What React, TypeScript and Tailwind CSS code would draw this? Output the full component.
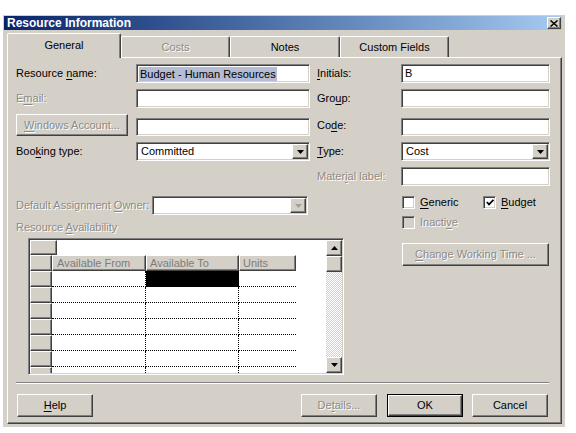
import * as React from "react";

const raised =
  "border border-t-white border-l-white border-r-[#404040] border-b-[#404040] shadow-[inset_-1px_-1px_0_#808080]";
const sunken =
  "border border-t-[#808080] border-l-[#808080] border-r-white border-b-white shadow-[inset_1px_1px_0_#404040,inset_-1px_-1px_0_#d4d0c8]";
const dim = "text-[#8c8a85] [text-shadow:1px_1px_0_#ffffff]";

function K({ children }: { children: React.ReactNode }) {
  return <span className="underline underline-offset-[2px]">{children}</span>;
}

function Field({ className = "", children }: { className?: string; children?: React.ReactNode }) {
  return (
    <div className={`${sunken} bg-white flex items-center pl-[3px] ${className}`}>{children}</div>
  );
}

function Arrow({ down = true, color = "#000" }: { down?: boolean; color?: string }) {
  return (
    <svg width="7" height="4" viewBox="0 0 7 4">
      <path d={down ? "M0 0h7L3.5 4z" : "M0 4h7L3.5 0z"} fill={color} />
    </svg>
  );
}

function Combo({
  value,
  disabled,
  className = "",
}: {
  value?: string;
  disabled?: boolean;
  className?: string;
}) {
  return (
    <div className={`${sunken} bg-white flex items-center p-px ${className}`}>
      <span className="flex-1 pl-[3px] truncate">{value}</span>
      <span
        className={`${raised} bg-[#d4d0c8] w-[16px] h-full flex items-center justify-center`}
      >
        <Arrow color={disabled ? "#a0a0a0" : "#000"} />
      </span>
    </div>
  );
}

function Check({ checked, disabled }: { checked?: boolean; disabled?: boolean }) {
  return (
    <span
      className={`${sunken} w-[13px] h-[13px] shrink-0 flex items-center justify-center ${
        disabled ? "bg-[#d4d0c8]" : "bg-white"
      }`}
    >
      {checked && (
        <svg width="8" height="7" viewBox="0 0 8 7">
          <path d="M0.8 3l2.2 2.4L7.4 0.8" stroke="#000" strokeWidth="1.7" fill="none" />
        </svg>
      )}
    </span>
  );
}

function Btn({
  children,
  disabled,
  className = "",
}: {
  children: React.ReactNode;
  disabled?: boolean;
  className?: string;
}) {
  return (
    <div
      className={`${raised} bg-[#d4d0c8] flex items-center justify-center ${
        disabled ? dim : "text-black"
      } ${className}`}
    >
      {children}
    </div>
  );
}

function Tab({
  children,
  w,
  active,
  disabled,
}: {
  children: React.ReactNode;
  w: string;
  active?: boolean;
  disabled?: boolean;
}) {
  return (
    <div
      className={`${w} ${
        active ? "h-[25px] -mb-px relative z-10" : "h-[21px]"
      } bg-[#d4d0c8] border-t border-l border-t-white border-l-white border-r border-r-[#404040] rounded-t-[2px] shadow-[inset_-1px_0_0_#808080] flex items-center justify-center ${
        disabled ? dim : "text-black"
      }`}
    >
      <span className={active ? "-mt-[2px]" : ""}>{children}</span>
    </div>
  );
}

const rows = [0, 1, 2, 3, 4, 5, 6];

function Grid() {
  return (
    <div className={`${sunken} w-[316px] h-[137px] ml-[12px] mt-[4px] bg-white flex p-px`}>
      <div className="flex-1 flex flex-col overflow-hidden">
        <div className="flex h-[15px] shrink-0">
          <div className={`${raised} bg-[#d4d0c8] w-[27px]`} />
          <div className="flex-1 bg-white" />
        </div>
        <div className="flex h-[16px] shrink-0 text-[#7c7c7c]">
          <div className={`${raised} bg-[#d4d0c8] w-[22px]`} />
          <div className={`${raised} bg-[#d4d0c8] w-[94px] pl-[4px] leading-[14px]`}>
            Available From
          </div>
          <div className={`${raised} bg-[#d4d0c8] w-[93px] pl-[3px] leading-[14px]`}>
            Available To
          </div>
          <div className={`${raised} bg-[#d4d0c8] w-[57px] pl-[3px] leading-[14px]`}>Units</div>
        </div>
        {rows.map((r) => (
          <div key={r} className="flex h-[16px] shrink-0">
            <div className={`${raised} bg-[#d4d0c8] w-[22px]`} />
            <div className="w-[94px] border-b border-r border-dotted border-black" />
            <div
              className={`w-[93px] border-b border-r border-dotted border-black ${
                r === 0 ? "bg-black" : ""
              }`}
            />
            <div className="w-[57px] border-b border-dotted border-black" />
          </div>
        ))}
      </div>
      <div className="w-[16px] flex flex-col">
        <div className={`${raised} bg-[#d4d0c8] h-[16px] flex items-center justify-center`}>
          <Arrow down={false} />
        </div>
        <div className={`${raised} bg-[#d4d0c8] h-[16px]`} />
        <div className="flex-1 bg-[repeating-conic-gradient(#d4d0c8_0_25%,#ffffff_0_50%)] bg-[length:2px_2px]" />
        <div className={`${raised} bg-[#d4d0c8] h-[16px] flex items-center justify-center`}>
          <Arrow />
        </div>
      </div>
    </div>
  );
}

export default function App() {
  return (
    <div className="w-[576px] h-[433px] bg-white overflow-hidden pt-[15px] pl-[3px] font-['Liberation_Sans',Arial,sans-serif] text-[11px] leading-[13px] text-black">
      <div className="w-[562px] h-[412px] bg-[#d4d0c8] flex flex-col">
        {/* title bar */}
        <div className="ml-px mt-px w-[558px] h-[14px] bg-linear-to-r from-[#0a246a] to-[#a6caf0] flex items-center justify-between">
          <span className="pl-[3px] text-white font-bold text-[12px] leading-[14px]">
            Resource Information
          </span>
          <span
            className={`${raised} bg-[#d4d0c8] w-[14px] h-[12px] mr-px flex items-center justify-center`}
          >
            <svg width="8" height="7" viewBox="0 0 8 7">
              <path d="M0.5 0.5l7 6M7.5 0.5l-7 6" stroke="#000" strokeWidth="1.5" />
            </svg>
          </span>
        </div>

        {/* tabs */}
        <div className="flex items-end h-[24px] mt-[3px] ml-[4px]">
          <Tab w="w-[114px]" active>
            General
          </Tab>
          <Tab w="w-[109px]" disabled>
            Costs
          </Tab>
          <Tab w="w-[110px]">Notes</Tab>
          <Tab w="w-[109px]">Custom Fields</Tab>
        </div>

        {/* panel */}
        <div className="ml-[4px] w-[555px] h-[367px] border border-t-white border-l-white border-r-[#404040] border-b-[#404040] shadow-[inset_-1px_-1px_0_#808080] pt-[6px] pl-[8px] flex flex-col">
          <div className="grid grid-cols-[120px_174px_7px_84px_149px] grid-rows-[19px_19px_22px_19px_19px] gap-y-[6px] items-center">
            <span>
              Resource <K>n</K>ame:
            </span>
            <Field className="h-[19px]">
              <span className="bg-[#b5bcd3] leading-[14px] px-px -ml-px">
                Budget - Human Resources
              </span>
            </Field>
            <span />
            <span>
              <K>I</K>nitials:
            </span>
            <Field className="h-[19px]">B</Field>

            <span className={dim}>
              E<K>m</K>ail:
            </span>
            <Field className="h-[19px]" />
            <span />
            <span>
              Gro<K>u</K>p:
            </span>
            <Field className="h-[19px]" />

            <Btn disabled className="w-[112px] h-[22px]">
              <span>
                <K>W</K>indows Account...
              </span>
            </Btn>
            <Field className="h-[18px] self-end" />
            <span />
            <span>
              Co<K>d</K>e:
            </span>
            <Field className="h-[18px] self-end" />

            <span>
              Boo<K>k</K>ing type:
            </span>
            <Combo value="Committed" className="h-[19px]" />
            <span />
            <span>
              <K>T</K>ype:
            </span>
            <Combo value="Cost" className="h-[19px]" />

            <span className="col-start-4">
              <span className={dim}>
                Mater<K>i</K>al label:
              </span>
            </span>
            <Field className="h-[19px]" />
          </div>

          <div className="flex mt-[10px]">
            <div className="w-[328px] flex flex-col">
              <div className="flex items-center h-[19px]">
                <span className={`${dim} w-[136px]`}>
                  Default Assignment <K>O</K>wner:
                </span>
                <Combo disabled className="w-[156px] h-[19px]" />
              </div>
              <span className={`${dim} mt-[6px]`}>
                Resource <K>A</K>vailability
              </span>
              <Grid />
            </div>
            <div className="ml-[58px] w-[148px] flex flex-col">
              <div className="flex items-center h-[13px]">
                <Check />
                <span className="ml-[5px] w-[63px]">
                  <K>G</K>eneric
                </span>
                <Check checked />
                <span className="ml-[5px]">
                  <K>B</K>udget
                </span>
              </div>
              <div className="flex items-center h-[13px] mt-[7px]">
                <Check disabled />
                <span className={`${dim} ml-[5px]`}>
                  Inacti<K>v</K>e
                </span>
              </div>
              <Btn disabled className="w-[147px] h-[23px] mt-[14px]">
                <span>
                  <K>C</K>hange Working Time ...
                </span>
              </Btn>
            </div>
          </div>

          <div className="w-[533px] mt-[7px] border-t border-t-[#808080] border-b border-b-white" />

          <div className="flex mt-[10px] h-[23px]">
            <Btn className="w-[76px] ml-px">
              <span>
                <K>H</K>elp
              </span>
            </Btn>
            <Btn disabled className="w-[76px] ml-[208px]">
              <span>
                De<K>t</K>ails...
              </span>
            </Btn>
            <div className="w-[76px] ml-[10px] border border-black flex">
              <Btn className="flex-1">OK</Btn>
            </div>
            <Btn className="w-[76px] ml-[9px]">Cancel</Btn>
          </div>
        </div>
      </div>
    </div>
  );
}
